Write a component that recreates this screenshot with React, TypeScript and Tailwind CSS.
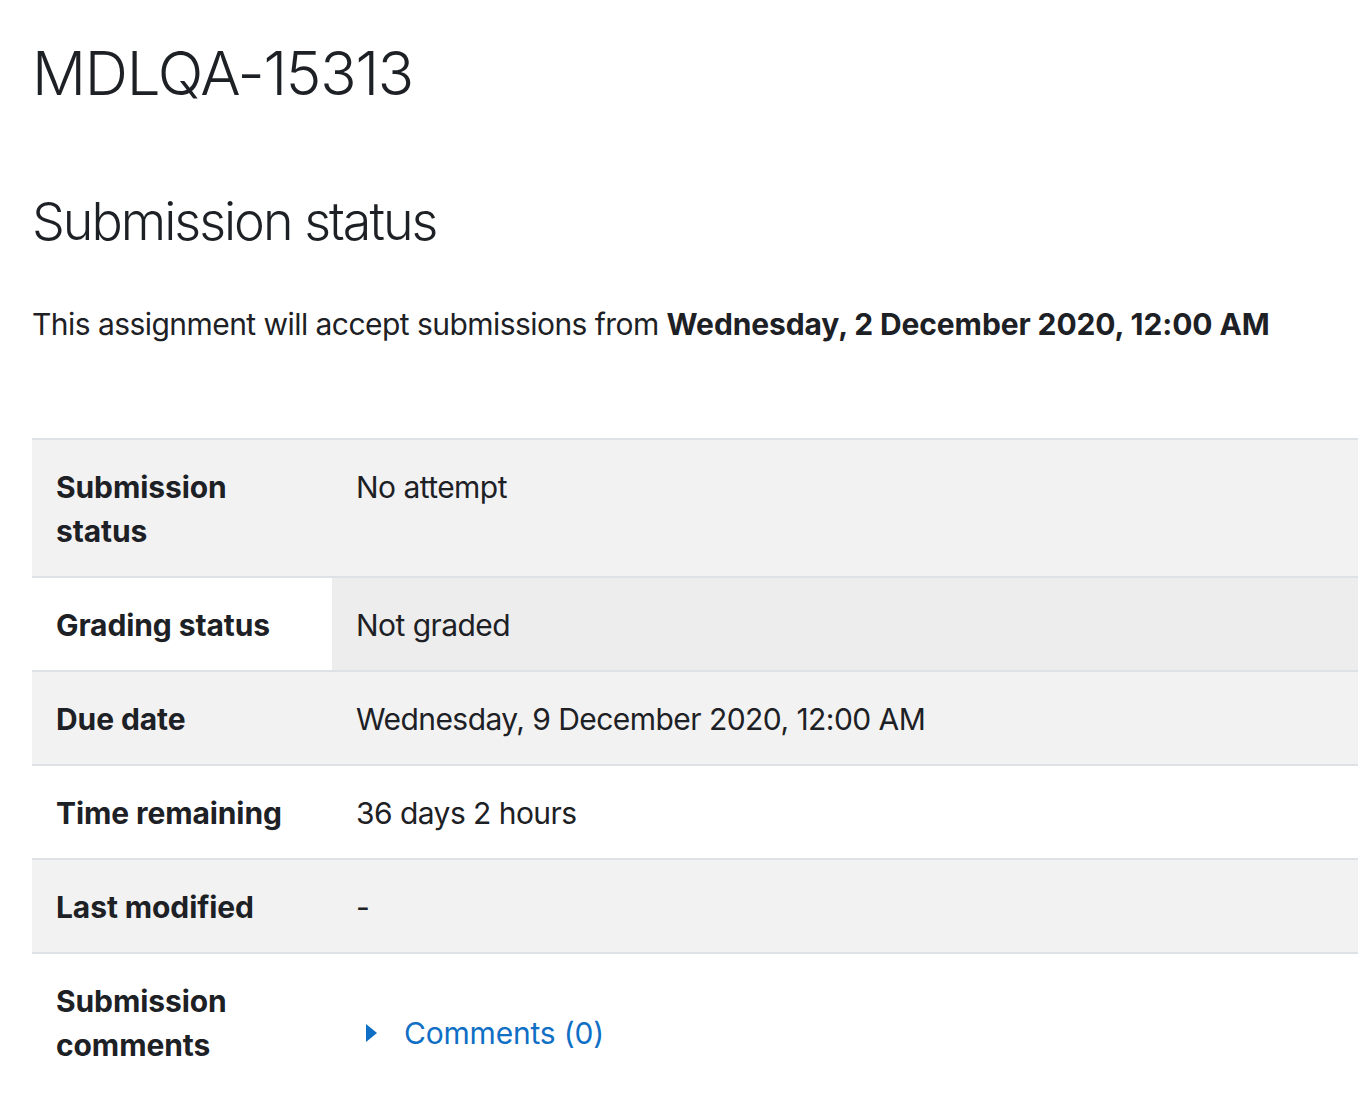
const rows = [
  { label: ["Submission", "status"], value: "No attempt", bg: "bg-[#f2f2f2]" },
  { label: ["Grading status"], value: "Not graded", bg: "bg-white", valueBg: "bg-[#ededed]" },
  { label: ["Due date"], value: "Wednesday, 9 December 2020, 12:00 AM", bg: "bg-[#f2f2f2]" },
  { label: ["Time remaining"], value: "36 days 2 hours", bg: "bg-white" },
  { label: ["Last modified"], value: "-", bg: "bg-[#f2f2f2]" },
];

function App() {
  return (
    <div className="min-h-screen bg-white pl-8 pt-[37px] text-[#1d2125] font-['Inter','Liberation_Sans',sans-serif] overflow-hidden">
      <h2 className="text-[60px] leading-[1.2] font-light tracking-[-1.2px]">MDLQA-15313</h2>
      <h3 className="mt-[82px] text-[52px] leading-[1.2] font-light tracking-[-2px]">Submission status</h3>
      <p className="mt-[49px] text-[30px] leading-[45px] tracking-[-0.55px]">
        This assignment will accept submissions from <b className="font-bold tracking-[-0.1px]">Wednesday, 2 December 2020, 12:00 AM</b>
      </p>
      <div className="mt-[91px] w-[1326px] border-t-2 border-[#dee2e6] text-[30px] leading-[44px]">
        {rows.map((r) => (
          <div key={r.value} className={`flex border-b-2 border-[#dee2e6] ${r.bg}`}>
            <div className="w-[300px] shrink-0 px-6 pt-[25px] pb-[23px] font-bold tracking-[-0.1px]">
              {r.label.map((l) => (
                <div key={l}>{l}</div>
              ))}
            </div>
            <div className={`flex-1 px-6 pt-[25px] pb-[23px] tracking-[-0.55px] ${r.valueBg ?? ""}`}>{r.value}</div>
          </div>
        ))}
        <div className="flex bg-white">
          <div className="w-[300px] shrink-0 px-6 pt-[25px] pb-[23px] font-bold tracking-[-0.1px]">
            <div>Submission</div>
            <div>comments</div>
          </div>
          <div className="flex-1 px-6 pt-[57px] tracking-[-0.2px]">
            <a href="#" className="flex items-center text-[#0f6fc5]">
              <svg width="12" height="18" viewBox="0 0 12 18" className="ml-[10px] mr-[26px]">
                <path d="M0 0 L11 9 L0 18 Z" fill="#0f6fc5" />
              </svg>
              Comments (0)
            </a>
          </div>
        </div>
      </div>
    </div>
  );
}

export default App;
